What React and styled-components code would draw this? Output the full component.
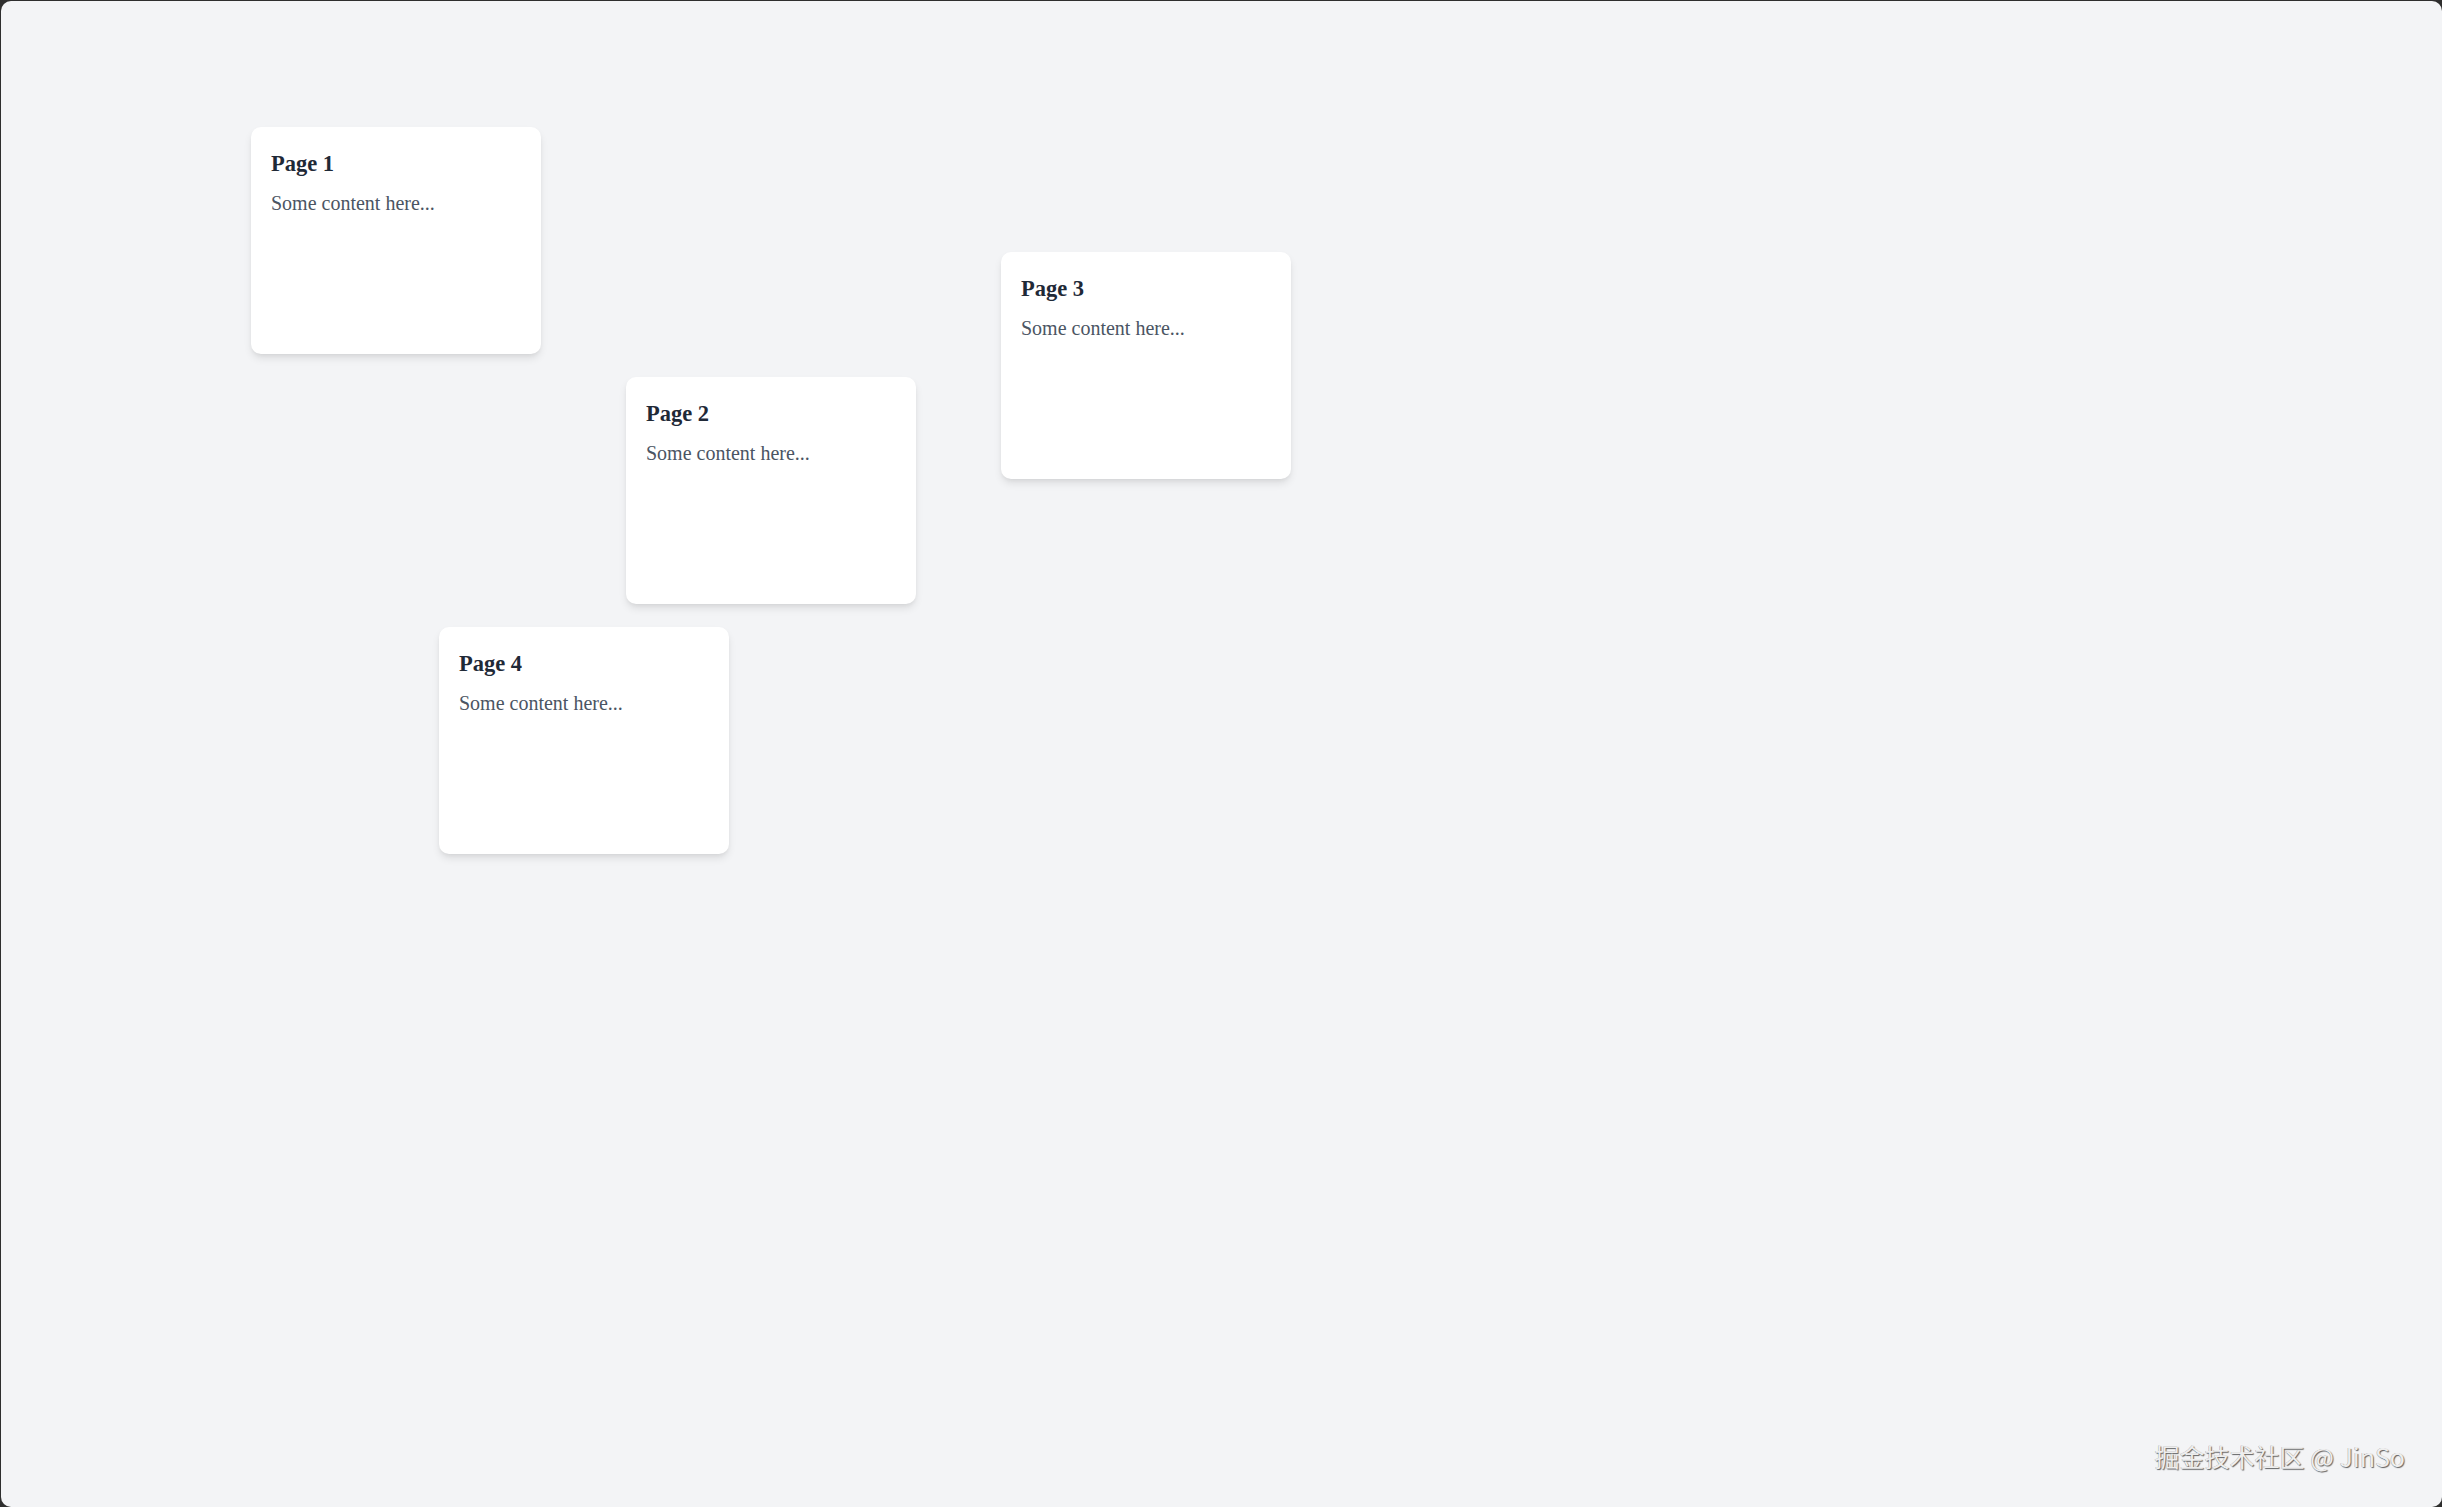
import React from "react";
import styled, { createGlobalStyle } from "styled-components";

const GlobalStyle = createGlobalStyle`
  html, body {
    margin: 0;
    padding: 0;
    height: 100%;
    background: #2e2e2e;
    overflow: hidden;
  }
  #root {
    height: 100%;
  }
`;

const Frame = styled.div`
  position: relative;
  box-sizing: border-box;
  height: 1507px;
  width: 2442px;
  padding: 1px 0 0 1px;
  background: #2e2e2e;
`;

const Canvas = styled.div`
  position: relative;
  width: 100%;
  height: 100%;
  background: #f3f4f6;
  border-radius: 10px;
  overflow: hidden;
  font-family: "Liberation Serif", "Times New Roman", serif;
`;

const PageCard = styled.div`
  position: absolute;
  box-sizing: border-box;
  width: 290px;
  height: 227px;
  padding: 20px;
  background: #ffffff;
  border-radius: 10px;
  box-shadow: 0 5px 9px -1px rgba(0, 0, 0, 0.1), 0 2px 5px -2px rgba(0, 0, 0, 0.08);
`;

const PageTitle = styled.h3`
  margin: 0 0 7.5px;
  font-size: 22.5px;
  line-height: 1.5;
  font-weight: 700;
  color: #1f2937;
`;

const PageText = styled.p`
  margin: 0;
  font-size: 20px;
  line-height: 1.5;
  color: #4b5563;
`;

const Watermark = styled.div`
  position: absolute;
  right: 37px;
  bottom: 38px;
  font-family: "Noto Sans CJK SC", "Noto Sans", sans-serif;
  font-size: 25px;
  line-height: 1;
  color: #eeeeee;
  text-shadow: 1px 1px 1px rgba(0, 0, 0, 0.6), -0.5px -0.5px 0 rgba(0, 0, 0, 0.3);
  white-space: nowrap;
`;

const pages = [
  { id: 1, x: 250, y: 125 },
  { id: 2, x: 625, y: 375 },
  { id: 3, x: 1000, y: 250 },
  { id: 4, x: 438, y: 625 },
];

export default function App() {
  return (
    <>
      <GlobalStyle />
      <Frame>
        <Canvas>
          {pages.map((p) => (
            <PageCard key={p.id} style={{ left: p.x, top: p.y + 1 }}>
              <PageTitle>Page {p.id}</PageTitle>
              <PageText>Some content here...</PageText>
            </PageCard>
          ))}
          <Watermark>掘金技术社区 @ JinSo</Watermark>
        </Canvas>
      </Frame>
    </>
  );
}
